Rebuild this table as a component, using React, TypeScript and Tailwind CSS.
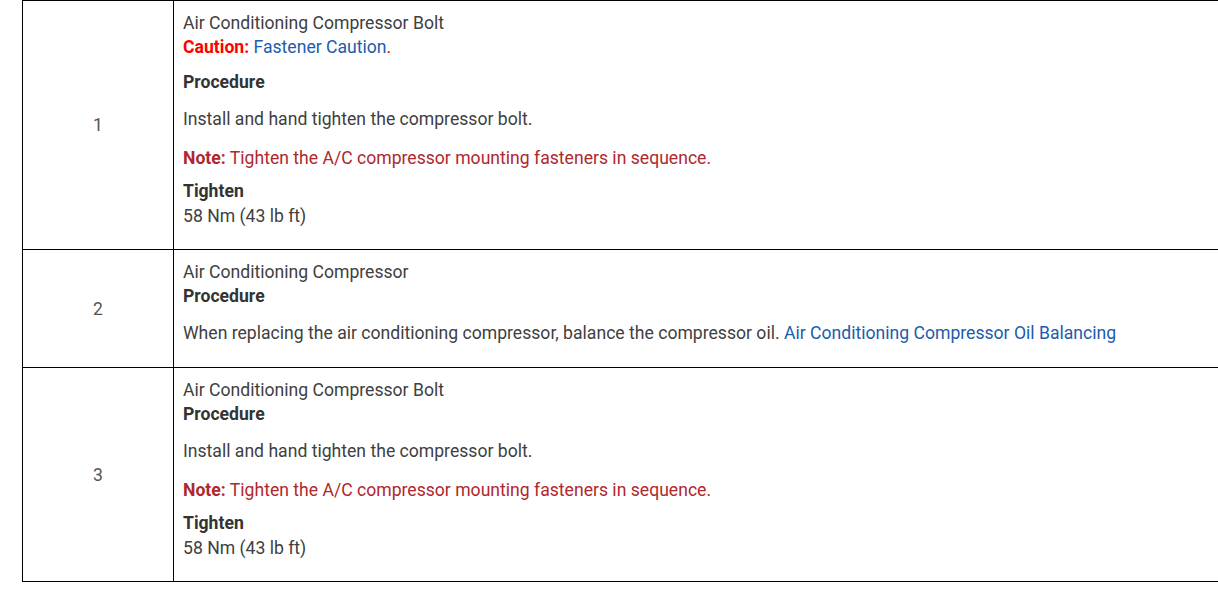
import React from "react";

type Step = {
  num: string;
  title: string;
  caution?: boolean;
  body: React.ReactNode;
  note?: boolean;
  torque?: string;
};

const steps: Step[] = [
  {
    num: "1",
    title: "Air Conditioning Compressor Bolt",
    caution: true,
    body: "Install and hand tighten the compressor bolt.",
    note: true,
    torque: "58 Nm (43 lb ft)",
  },
  {
    num: "2",
    title: "Air Conditioning Compressor",
    body: (
      <>
        When replacing the air conditioning compressor, balance the compressor oil.{" "}
        <a className="text-[#1c5cab]">Air Conditioning Compressor Oil Balancing</a>
      </>
    ),
  },
  {
    num: "3",
    title: "Air Conditioning Compressor Bolt",
    body: "Install and hand tighten the compressor bolt.",
    note: true,
    torque: "58 Nm (43 lb ft)",
  },
];

export default function App() {
  return (
    <div
      className="h-[592px] w-[1218px] overflow-hidden bg-white pl-[22px] text-[17.6px] leading-[24px] text-[#404040]"
      style={{ fontFamily: "Roboto, 'Liberation Sans', sans-serif" }}
    >
      <table className="w-[1220px] border-collapse">
        <tbody>
          {steps.map((s) => (
            <tr key={s.num}>
              <td className="w-[151px] border border-black text-center align-middle text-[#555]">
                {s.num}
              </td>
              <td
                className={[
                  "border border-black pl-[9px] pt-[10px] align-top",
                  s.torque ? "pb-[21px]" : "pb-[22px]",
                ].join(" ")}
              >
                <div>{s.title}</div>
                {s.caution ? (
                  <div className="mb-[11px]">
                    <span className="font-bold text-[#ff0000]">Caution:</span>{" "}
                    <a className="text-[#1c5cab]">Fastener Caution</a>
                    <span className="text-[#ff0000]">.</span>
                  </div>
                ) : null}
                <div className="font-bold text-[#333]">Procedure</div>
                <p className="mt-[13px]">{s.body}</p>
                {s.note ? (
                  <p className="mt-[15px] text-[#b0272d]">
                    <span className="font-bold">Note:</span> Tighten the A/C compressor
                    mounting fasteners in sequence.
                  </p>
                ) : null}
                {s.torque ? (
                  <>
                    <div className="mt-[9px] font-bold text-[#333]">Tighten</div>
                    <div className="mt-[1px]">{s.torque}</div>
                  </>
                ) : null}
              </td>
            </tr>
          ))}
        </tbody>
      </table>
    </div>
  );
}
